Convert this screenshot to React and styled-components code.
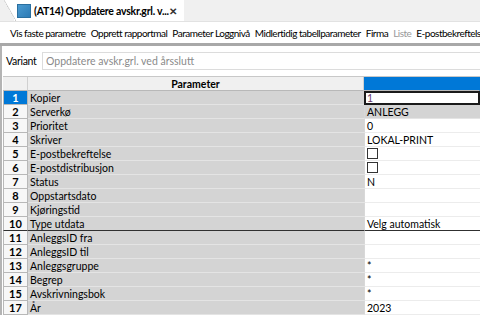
import React from 'react';
import styled, { createGlobalStyle } from 'styled-components';

const GlobalStyle = createGlobalStyle`
  html, body {
    margin: 0;
    padding: 0;
    background: #fff;
    font-family: Lato, "Open Sans", sans-serif;
    color: #000;
    overflow: hidden;
  }
`;

const Page = styled.div`
  width: 480px;
  height: 315px;
  display: flex;
  flex-direction: column;
  overflow: hidden;
`;

const TabBar = styled.div`
  height: 22px;
  background: #f0f0f0;
  display: flex;
  align-items: flex-end;
  padding-left: 14px;
  border-bottom: 1px solid #e2e2e2;
`;

const Tab = styled.div`
  position: relative;
  height: 21px;
  width: 170px;
  background: #fff;
  display: flex;
  align-items: center;
  padding: 0 8px 0 3px;
  box-sizing: border-box;
  &::before {
    content: '';
    position: absolute;
    left: -10px;
    top: 0;
    bottom: 0;
    width: 12px;
    background: linear-gradient(to top right, transparent 48%, #c8c8c8 49%, #fff 54%);
  }
`;

const TabIcon = styled.div`
  width: 12px;
  height: 12px;
  background: linear-gradient(135deg, #4a9ad0, #2d7bb5);
  border: 1px solid #2a6f9f;
  margin-right: 3px;
  flex-shrink: 0;
`;

const TabTitle = styled.span`
  font-size: 10.5px;
  font-weight: 700;
  letter-spacing: -0.25px;
  white-space: nowrap;
  flex: 1;
`;

const Close = styled.span`
  font-size: 10px;
  font-weight: 700;
  color: #333;
`;

const Toolbar = styled.div`
  height: 21px;
  display: flex;
  align-items: center;
  gap: 5px;
  padding-left: 10px;
  white-space: nowrap;
  border-bottom: 3px solid #a8a8a8;
`;

const ToolItem = styled.span`
  font-size: 10px;
  letter-spacing: -0.5px;
  color: ${p => (p.disabled ? '#9a9a9a' : '#000')};
`;

const Body = styled.div`
  flex: 1;
  border-left: 2px solid #b4b4b4;
  display: flex;
  flex-direction: column;
`;

const VariantRow = styled.div`
  height: 18px;
  margin-top: 6px;
  display: flex;
  align-items: center;
  padding-left: 4px;
`;

const Label = styled.span`
  font-size: 10.5px;
  letter-spacing: -0.3px;
  width: 36px;
`;

const Input = styled.div`
  flex: 1;
  height: 18px;
  border: 1px solid #dcdcdc;
  border-right: none;
  box-sizing: border-box;
  display: flex;
  align-items: center;
  padding-left: 3px;
  font-size: 10.5px;
  color: #8a8a8a;
`;

const Grid = styled.div`
  margin-top: 6px;
  margin-left: 1px;
  display: grid;
  grid-template-columns: 25px 336px 1fr;
  grid-auto-rows: 14px;
  border-top: 1px solid #c8c8c8;
`;

const Cell = styled.div`
  box-sizing: border-box;
  font-size: 10.5px;
  display: flex;
  align-items: center;
  padding-left: 2px;
  white-space: nowrap;
  overflow: hidden;
  border-bottom: 1px solid ${p => (p.$thick ? '#303030' : '#e6e6e6')};
`;

const HeadCell = styled(Cell)`
  background: ${p => (p.$blue ? '#0078d7' : '#f0f0f0')};
  justify-content: center;
  font-weight: 700;
  padding: 0;
  border-bottom: 1px solid #b8b8b8;
  border-right: 1px solid ${p => (p.$blue ? '#0078d7' : '#d0d0d0')};
`;

const NumCell = styled(Cell)`
  background: ${p => (p.$active ? '#0078d7' : '#f7f7f7')};
  color: ${p => (p.$active ? '#fff' : '#000')};
  justify-content: center;
  font-weight: 700;
  font-size: 11px;
  padding: 0;
  border-right: 1px solid #b8b8b8;
  border-left: 1px solid #b8b8b8;
  border-bottom-color: ${p => (p.$thick ? '#303030' : '#b8b8b8')};
`;

const ParamCell = styled(Cell)`
  background: #d4d4d4;
  border-bottom-color: ${p => (p.$thick ? '#303030' : '#e4e4e4')};
`;

const ValueCell = styled(Cell)`
  background: ${p => (p.$gray ? '#d4d4d4' : '#fff')};
  border-left: 1px solid #d8d8d8;
  outline: ${p => (p.$focus ? '2px solid #1a1a1a' : 'none')};
  outline-offset: -2px;
  color: ${p => (p.$focus ? '#6a3a6a' : '#000')};
  border-bottom-color: ${p => (p.$thick ? '#303030' : p.$gray ? '#e4e4e4' : '#ececec')};
`;

const Check = styled.span`
  width: 9px;
  height: 9px;
  border: 1px solid #333;
  background: #fff;
  display: inline-block;
`;

const tools = [
  'Vis faste parametre',
  'Opprett rapportmal',
  'Parameter Loggnivå',
  'Midlertidig tabellparameter',
  'Firma',
  'Liste',
  'E-postbekreftelse',
];

const rows = [
  { n: 1, name: 'Kopier', value: '1', focus: true },
  { n: 2, name: 'Serverkø', value: 'ANLEGG', gray: true },
  { n: 3, name: 'Prioritet', value: '0' },
  { n: 4, name: 'Skriver', value: 'LOKAL-PRINT' },
  { n: 5, name: 'E-postbekreftelse', check: true },
  { n: 6, name: 'E-postdistribusjon', check: true },
  { n: 7, name: 'Status', value: 'N' },
  { n: 8, name: 'Oppstartsdato', value: '' },
  { n: 9, name: 'Kjøringstid', value: '' },
  { n: 10, name: 'Type utdata', value: 'Velg automatisk', thick: true },
  { n: 11, name: 'AnleggsID fra', value: '' },
  { n: 12, name: 'AnleggsID til', value: '' },
  { n: 13, name: 'Anleggsgruppe', value: '*' },
  { n: 14, name: 'Begrep', value: '*' },
  { n: 15, name: 'Avskrivningsbok', value: '*' },
  { n: 17, name: 'År', value: '2023' },
];

export default function App() {
  return (
    <Page>
      <GlobalStyle />
      <TabBar>
        <Tab>
          <TabIcon />
          <TabTitle>(AT14) Oppdatere avskr.grl. v...</TabTitle>
          <Close>✕</Close>
        </Tab>
      </TabBar>
      <Toolbar>
        {tools.map(t => (
          <ToolItem key={t} disabled={t === 'Liste'}>{t}</ToolItem>
        ))}
      </Toolbar>
      <Body>
        <VariantRow>
          <Label>Variant</Label>
          <Input>Oppdatere avskr.grl. ved årsslutt</Input>
        </VariantRow>
        <Grid>
          <HeadCell />
          <HeadCell>Parameter</HeadCell>
          <HeadCell $blue />
          {rows.map(r => (
            <React.Fragment key={r.n}>
              <NumCell $active={r.n === 1} $thick={r.thick}>{r.n}</NumCell>
              <ParamCell $thick={r.thick}>{r.name}</ParamCell>
              <ValueCell $gray={r.gray} $focus={r.focus} $thick={r.thick}>
                {r.check ? <Check /> : r.value}
              </ValueCell>
            </React.Fragment>
          ))}
        </Grid>
      </Body>
    </Page>
  );
}
